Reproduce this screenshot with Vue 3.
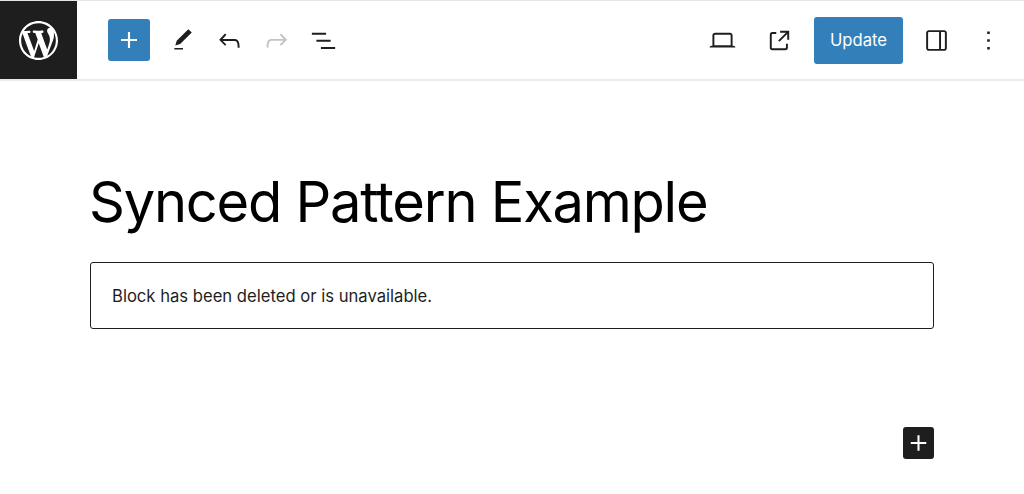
<template>
  <div class="editor">
    <header class="topbar">
      <div class="left-side">
        <a class="wp-logo">
          <svg viewBox="0 0 20 20" width="39" height="39">
            <path d="M20 10c0-5.51-4.49-10-10-10C4.48 0 0 4.49 0 10c0 5.52 4.48 10 10 10 5.51 0 10-4.48 10-10zM7.78 15.37L4.37 6.22c.55-.02 1.17-.08 1.17-.08.5-.06.44-1.13-.06-1.11 0 0-1.45.11-2.37.11-.18 0-.37 0-.58-.01C4.12 2.69 6.87 1.11 10 1.11c2.33 0 4.45.87 6.05 2.34-.68-.11-1.65.39-1.65 1.58 0 .74.45 1.36.9 2.1.35.61.55 1.36.55 2.46 0 1.49-1.4 5-1.4 5l-3.03-8.37c.54-.02.82-.17.82-.17.5-.05.44-1.25-.06-1.22 0 0-1.44.12-2.38.12-.87 0-2.33-.12-2.33-.12-.5-.03-.56 1.2-.06 1.22l.92.08 1.26 3.41zM17.41 10c.24-.64.74-1.87.43-4.25.7 1.29 1.05 2.71 1.05 4.25 0 3.29-1.73 6.24-4.4 7.78.97-2.59 1.94-5.2 2.92-7.78zM6.1 18.09C3.12 16.65 1.11 13.53 1.11 10c0-1.3.23-2.48.72-3.59C3.25 10.3 4.67 14.2 6.1 18.09zm4.03-6.63l2.58 6.98c-.86.29-1.76.45-2.71.45-.79 0-1.57-.11-2.29-.33.81-2.38 1.62-4.74 2.42-7.1z" fill="#fff" />
          </svg>
        </a>
        <button class="inserter">
          <svg viewBox="0 0 24 24" width="32" height="32"><path :d="plusPath" fill="#fff" /></svg>
        </button>
        <div class="tools">
          <button v-for="tool in leftTools" :key="tool.name" class="icon-btn" :class="{ disabled: tool.disabled }">
            <svg viewBox="0 0 24 24" :width="tool.size || 31" :height="tool.size || 31"><path :d="tool.d" /></svg>
          </button>
        </div>
      </div>
      <div class="right-side">
        <button class="icon-btn desktop">
          <svg viewBox="0 0 24 24" width="31" height="31"><path :d="icons.desktop" /></svg>
        </button>
        <button class="icon-btn external">
          <svg viewBox="0 0 24 24" width="31" height="31"><path :d="icons.external" /></svg>
        </button>
        <button class="update">Update</button>
        <button class="icon-btn drawer">
          <svg viewBox="0 0 24 24" width="31" height="31"><path :d="icons.drawer" /></svg>
        </button>
        <button class="icon-btn more">
          <svg viewBox="0 0 24 24" width="31" height="31"><path :d="icons.more" /></svg>
        </button>
      </div>
    </header>

    <main class="content">
      <h1 class="title">Synced Pattern Example</h1>
      <div class="warning">Block has been deleted or is unavailable.</div>
      <div class="append">
        <button class="add-block">
          <svg viewBox="0 0 24 24" width="32" height="32"><path :d="plusPath" fill="#fff" /></svg>
        </button>
      </div>
    </main>
  </div>
</template>

<script setup>
const plusPath = 'M18 11.2h-5.2V6h-1.6v5.2H6v1.6h5.2V18h1.6v-5.2H18z'

const icons = {
  desktop: 'M20.5 16h-.7V8c0-1.1-.9-2-2-2H6.2c-1.1 0-2 .9-2 2v8h-.7c-.8 0-1.5.7-1.5 1.5h20c0-.8-.7-1.5-1.5-1.5zM5.7 8c0-.3.2-.5.5-.5h11.6c.3 0 .5.2.5.5v7.6H5.7V8z',
  external: 'M19.5 4.5h-7V6h4.44l-5.97 5.97 1.06 1.06L18 7.06v4.44h1.5v-7Zm-13 1a2 2 0 0 0-2 2v10a2 2 0 0 0 2 2h10a2 2 0 0 0 2-2v-3H17v3a.5.5 0 0 1-.5.5h-10a.5.5 0 0 1-.5-.5v-10a.5.5 0 0 1 .5-.5h3V5.5h-3Z',
  drawer: 'M18 4H6c-1.1 0-2 .9-2 2v12c0 1.1.9 2 2 2h12c1.1 0 2-.9 2-2V6c0-1.1-.9-2-2-2zm-4 14.5H6c-.3 0-.5-.2-.5-.5V6c0-.3.2-.5.5-.5h8v13zm4.5-.5c0 .3-.2.5-.5.5h-2.5v-13H18c.3 0 .5.2.5.5v12z',
  more: 'M13 19h-2v-2h2v2zm0-6h-2v-2h2v2zm0-6h-2V5h2v2z'
}

const leftTools = [
  { name: 'tools', size: 26, d: 'M20.1 5.1L16.9 2 6.2 12.7l-1.3 4.4 4.5-1.3L20.1 5.1zM4 20.8h8v-1.5H4v1.5z' },
  { name: 'undo', d: 'M18.3 11.7c-.6-.6-1.4-.9-2.3-.9H6.7l2.9-3.3-1.1-1-4.5 5L8.5 16l1-1-2.7-2.7H16c.5 0 .9.2 1.3.5 1 1 1 3.4 1 4.5v.3h1.5v-.2c0-1.5 0-4.3-1.5-5.7z' },
  { name: 'redo', disabled: true, d: 'M15.6 6.5l-1.1 1 2.9 3.3H8c-.9 0-1.7.3-2.3.9-1.4 1.5-1.4 4.2-1.4 5.6v.2h1.5v-.3c0-1.1 0-3.5 1-4.5.3-.3.7-.5 1.3-.5h9.2L14.5 15l1.1 1.1 4.6-4.6-4.6-5z' },
  { name: 'list', d: 'M3 6h11v1.5H3V6zm3.5 5.5h11V13h-11v-1.5zM21 17H10v1.5h11V17z' }
]
</script>

<style>
html, body {
  margin: 0;
  background: #fff;
}
</style>

<style scoped>
.editor {
  font-family: Inter, "Liberation Sans", sans-serif;
  color: #1e1e1e;
  height: 494px;
  overflow: hidden;
}

button {
  border: none;
  background: none;
  padding: 0;
  font: inherit;
  display: flex;
  align-items: center;
  justify-content: center;
}

.topbar {
  display: flex;
  justify-content: space-between;
  height: 81px;
  box-sizing: border-box;
  border-top: 1px solid #e6e6e6;
  border-bottom: 2px solid #ebebeb;
}

.left-side,
.right-side,
.tools {
  display: flex;
  align-items: center;
}

.wp-logo {
  width: 77px;
  height: 100%;
  background: #1e1e1e;
  display: flex;
  align-items: center;
  justify-content: center;
}

.inserter {
  width: 42px;
  height: 42px;
  margin-left: 31px;
  background: #327fba;
  border-radius: 3px;
}

.tools {
  margin-left: 9px;
}

.icon-btn {
  width: 47px;
  height: 47px;
  fill: #1e1e1e;
}

.icon-btn.disabled {
  fill: #c4c4c4;
}

.right-side {
  padding-right: 20px;
}

.desktop,
.external {
  width: 31px;
}

.external {
  margin-left: 26px;
}

.update {
  width: 89px;
  height: 47px;
  margin: 0 18px 0 19px;
  background: #327fba;
  color: #fff;
  border-radius: 3px;
  font-size: 16.64px;
}

.drawer {
  width: 31px;
}

.more {
  width: 31px;
  margin-left: 21px;
}

.content {
  padding: 0 90px;
}

.title {
  margin: 88px 0 0;
  font-size: 56px;
  font-weight: 400;
  line-height: 66px;
  color: #000;
  letter-spacing: -1.25px;
  text-indent: -1px;
}

.warning {
  margin-top: 27px;
  height: 67px;
  box-sizing: border-box;
  padding: 0 21px;
  display: flex;
  align-items: center;
  border: 1px solid #1e1e1e;
  border-radius: 3px;
  font-size: 16.64px;
}

.append {
  display: flex;
  justify-content: flex-end;
  margin-top: 98px;
}

.add-block {
  width: 31px;
  height: 32px;
  background: #1e1e1e;
  border-radius: 3px;
}
</style>
